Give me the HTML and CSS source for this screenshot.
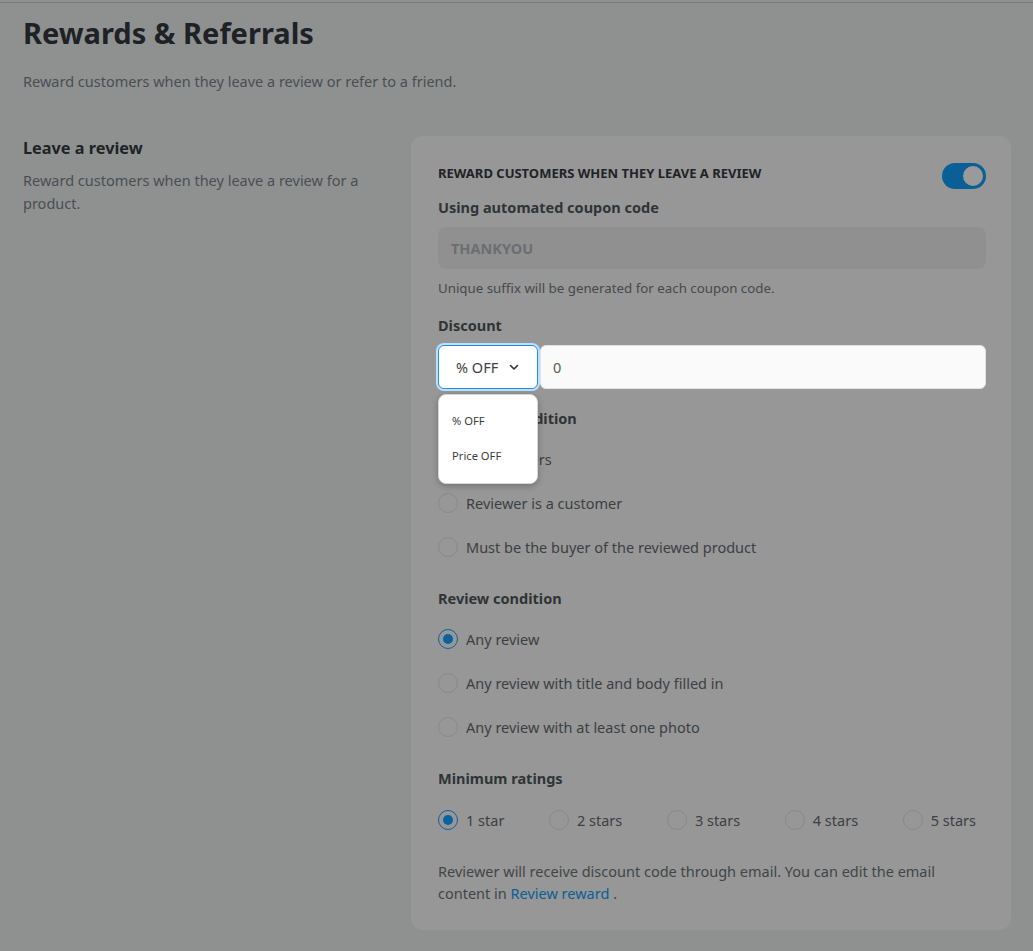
FILE: index.html
```html
<!DOCTYPE html>
<html lang="en">
<head>
<meta charset="utf-8">
<title>Rewards &amp; Referrals</title>
<link rel="stylesheet" href="styles.css">
</head>
<body>
<div class="page">
  <h1 class="title">Rewards &amp; Referrals</h1>
  <p class="subtitle">Reward customers when they leave a review or refer to a friend.</p>

  <div class="section">
    <div class="section-info">
      <h2 class="section-title">Leave a review</h2>
      <p class="section-desc">Reward customers when they leave a review for a product.</p>
    </div>

    <div class="card">
      <div class="card-head">
        <span class="card-head-title">REWARD CUSTOMERS WHEN THEY LEAVE A REVIEW</span>
        <span class="toggle"><span class="knob"></span></span>
      </div>

      <div class="label label-first">Using automated coupon code</div>
      <div class="code-input">THANKYOU</div>
      <div class="helper">Unique suffix will be generated for each coupon code.</div>

      <div class="label label-after-input">Discount</div>
      <div class="discount-row">
        <div class="select-wrap">
          <div class="select">
            <span>% OFF</span>
            <svg class="chevron" width="12" height="12" viewBox="0 0 12 12"><polyline points="2.5,4.5 6,8 9.5,4.5" fill="none" stroke="#333" stroke-width="1.6" stroke-linecap="round" stroke-linejoin="round"/></svg>
          </div>
          <div class="dropdown">
            <div class="dropdown-item">% OFF</div>
            <div class="dropdown-item">Price OFF</div>
          </div>
        </div>
        <div class="amount">0</div>
      </div>

      <div class="label label-after-input">Reviewer condition</div>
      <div class="radio-list">
        <div class="radio-row"><span class="radio"></span><span class="radio-label">All reviewers</span></div>
        <div class="radio-row"><span class="radio"></span><span class="radio-label">Reviewer is a customer</span></div>
        <div class="radio-row"><span class="radio"></span><span class="radio-label">Must be the buyer of the reviewed product</span></div>
      </div>

      <div class="label label-after-list">Review condition</div>
      <div class="radio-list">
        <div class="radio-row"><span class="radio checked"></span><span class="radio-label">Any review</span></div>
        <div class="radio-row"><span class="radio"></span><span class="radio-label">Any review with title and body filled in</span></div>
        <div class="radio-row"><span class="radio"></span><span class="radio-label">Any review with at least one photo</span></div>
      </div>

      <div class="label label-after-list">Minimum ratings</div>
      <div class="rating-row">
        <div class="radio-row"><span class="radio checked"></span><span class="radio-label">1 star</span></div>
        <div class="radio-row"><span class="radio"></span><span class="radio-label">2 stars</span></div>
        <div class="radio-row"><span class="radio"></span><span class="radio-label">3 stars</span></div>
        <div class="radio-row"><span class="radio"></span><span class="radio-label">4 stars</span></div>
        <div class="radio-row"><span class="radio"></span><span class="radio-label">5 stars</span></div>
      </div>

      <p class="footnote">Reviewer will receive discount code through email. You can edit the email content in <a class="link" href="#">Review reward</a> .</p>
    </div>
  </div>
</div>
</body>
</html>
```

FILE: styles.css
```css
* { box-sizing: border-box; }

html, body {
  margin: 0;
  padding: 0;
  background: #8f9191;
}

body {
  font-family: "Noto Sans", "Open Sans", Arial, sans-serif;
  font-size: 14.5px;
  color: #3c4042;
  padding-top: 2px;
}

.page {
  border-top: 1px solid #7b7d7d;
  padding: 0 22px 20px 23px;
}

.title {
  margin: 12px 0 0;
  font-size: 29px;
  line-height: 36px;
  font-weight: 700;
  color: #1e2226;
}

.subtitle {
  margin: 20px 0 0;
  line-height: 20px;
  color: #4a4e51;
}

.section {
  display: grid;
  grid-template-columns: 1fr 600px;
  gap: 28px;
  margin-top: 45px;
}

.section-title {
  margin: 2px 0 0;
  font-size: 16.3px;
  line-height: 20px;
  font-weight: 700;
  color: #1f2326;
}

.section-desc {
  margin: 11px 0 0;
  line-height: 23px;
  color: #4a4e51;
}

.card {
  background: #979797;
  border-radius: 12px;
  padding: 27px 25px 26px 27px;
}

.card-head {
  display: flex;
  justify-content: space-between;
  align-items: flex-start;
  height: 26px;
}

.card-head-title {
  font-size: 13px;
  line-height: 20px;
  font-weight: 700;
  color: #1f2326;
}

.toggle {
  width: 44px;
  height: 26px;
  border-radius: 13px;
  background: #0a5f96;
  display: flex;
  align-items: center;
  justify-content: flex-end;
  padding-right: 3px;
}

.knob {
  width: 20px;
  height: 20px;
  border-radius: 50%;
  background: #9a9a9a;
}

.label {
  font-size: 14.5px;
  line-height: 20px;
  font-weight: 700;
  color: #2f3436;
}

.label-first { margin-top: 8px; }
.label-after-input { margin-top: 19px; }
.label-after-list { margin-top: 29px; }

.code-input {
  margin-top: 10px;
  height: 42px;
  border-radius: 8px;
  background: #909090;
  padding: 0 13px;
  display: flex;
  align-items: center;
  font-weight: 700;
  color: #6b6e70;
}

.helper {
  margin-top: 11px;
  font-size: 13.3px;
  line-height: 16px;
  color: #46494b;
}

.discount-row {
  margin-top: 10px;
  display: flex;
  gap: 2px;
  height: 44px;
}

.select-wrap {
  position: relative;
  width: 100px;
  flex: none;
}

.select {
  height: 44px;
  background: #ffffff;
  border: 1px solid #1b8fe3;
  border-radius: 6px;
  box-shadow: 0 0 0 2px #bfe0f6;
  display: flex;
  align-items: center;
  padding-left: 17px;
  gap: 10px;
  color: #3d4144;
}

.chevron { display: block; }

.dropdown {
  position: absolute;
  top: 49px;
  left: 0;
  width: 100px;
  background: #ffffff;
  border: 1px solid #d6d6d6;
  border-radius: 8px;
  box-shadow: 0 2px 6px rgba(0, 0, 0, 0.25);
  padding: 8px 0 10px;
  z-index: 2;
}

.dropdown-item {
  height: 35px;
  line-height: 35px;
  padding-left: 13px;
  font-size: 11.2px;
  color: #3a3d40;
}

.amount {
  flex: 1;
  background: #fafafa;
  border: 1px solid #e2e2e2;
  border-radius: 6px;
  display: flex;
  align-items: center;
  padding-left: 12px;
  color: #55595c;
}

.radio-list {
  margin-top: 19px;
  display: flex;
  flex-direction: column;
  gap: 20px;
}

.radio-row {
  display: flex;
  align-items: center;
  gap: 8px;
  height: 24px;
}

.radio {
  width: 20px;
  height: 20px;
  border-radius: 50%;
  border: 1px solid #878989;
  flex: none;
  display: flex;
  align-items: center;
  justify-content: center;
}

.radio.checked {
  border: 1.5px solid #0a62a0;
}

.radio.checked::after {
  content: "";
  width: 10px;
  height: 10px;
  border-radius: 50%;
  background: #0a62a0;
}

.radio-label {
  color: #3c4042;
  line-height: 20px;
}

.rating-row {
  margin-top: 20px;
  display: flex;
  justify-content: space-between;
  padding-right: 10px;
}

.footnote {
  margin: 28px 0 0;
  line-height: 22px;
  color: #414547;
}

.link {
  color: #0b5e96;
  text-decoration: none;
}
```
